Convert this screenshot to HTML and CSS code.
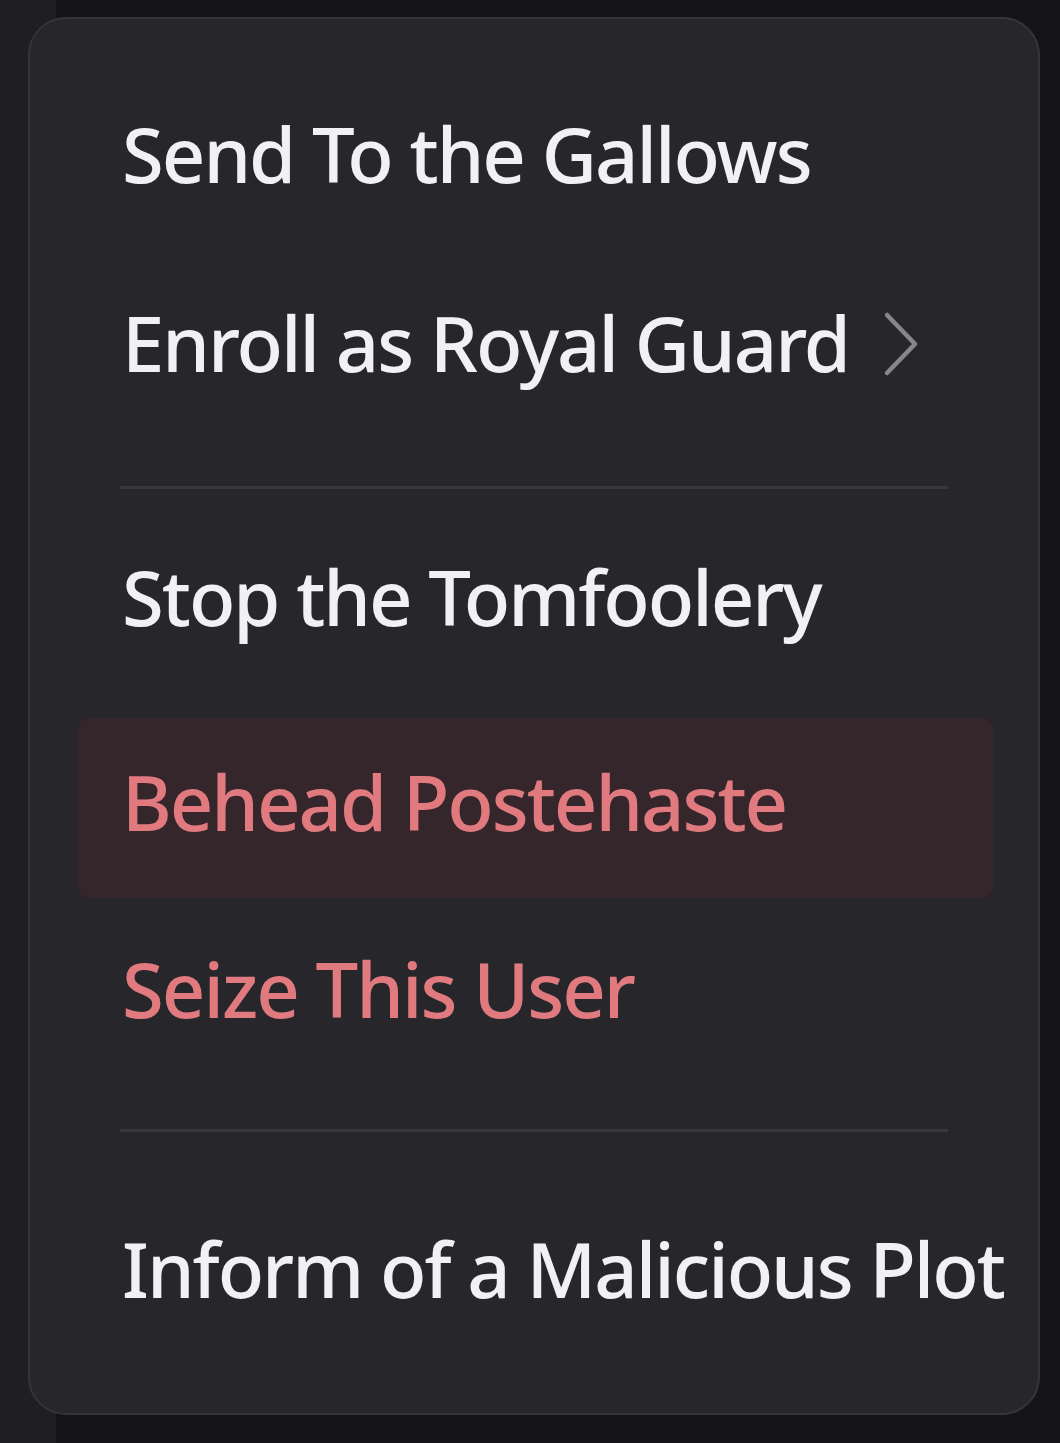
FILE: index.html
```html
<!DOCTYPE html>
<html lang="en">
<head>
<meta charset="utf-8">
<title>Context menu</title>
<link rel="stylesheet" href="styles.css">
</head>
<body>
<div class="backdrop-strip"></div>
<div class="menu" role="menu">
  <div class="item item-first" role="menuitem"><span class="label">Send To the Gallows</span></div>
  <div class="item item-sub" role="menuitem">
    <span class="label">Enroll as Royal Guard</span>
    <svg class="chevron" width="40" height="66" viewBox="0 0 40 66" aria-hidden="true">
      <path d="M5 4 L33 33 L5 62" fill="none" stroke="currentColor" stroke-width="4.5" stroke-linecap="round" stroke-linejoin="round"/>
    </svg>
  </div>
  <div class="separator sep-first"></div>
  <div class="item item-stop" role="menuitem"><span class="label">Stop the Tomfoolery</span></div>
  <div class="item danger focused item-behead" role="menuitem"><span class="label">Behead Postehaste</span></div>
  <div class="item danger item-seize" role="menuitem"><span class="label">Seize This User</span></div>
  <div class="separator sep-second"></div>
  <div class="item item-inform" role="menuitem"><span class="label">Inform of a Malicious Plot</span></div>
</div>
</body>
</html>
```
FILE: styles.css
```css
html, body {
  margin: 0;
  padding: 0;
}

body {
  width: 1060px;
  height: 1443px;
  background: #141418;
  position: relative;
  overflow: hidden;
  font-family: "Noto Sans", "Open Sans", sans-serif;
}

.backdrop-strip {
  position: absolute;
  left: 0;
  top: 0;
  width: 56px;
  height: 1443px;
  background: #1f1f23;
}

.menu {
  position: absolute;
  left: 28px;
  top: 17px;
  box-sizing: border-box;
  width: 1012px;
  height: 1398px;
  background: #26262b;
  border: 2px solid #34343a;
  border-radius: 38px;
  padding: 45px 45px 0 48px;
  display: flex;
  flex-direction: column;
}

.item {
  height: 180px;
  flex: 0 0 auto;
  box-sizing: border-box;
  padding-left: 44px;
  display: flex;
  align-items: center;
  gap: 33px;
  color: #f1f1f3;
  font-size: 76px;
  font-weight: 500;
  letter-spacing: -2px;
  line-height: 1;
  white-space: nowrap;
  border-radius: 12px;
}

.label {
  display: block;
}

.chevron {
  color: #86868c;
  flex: 0 0 auto;
  margin-top: 2px;
}

.danger {
  color: #e07a7f;
}

.focused {
  background: #34262b;
  padding-bottom: 12px;
}

.separator {
  height: 3px;
  flex: 0 0 auto;
  margin-left: 42px;
  width: 828px;
  background: #37373d;
}

.item-sub { margin-top: 9px; }
.sep-first { margin-top: 53px; }
.item-stop { margin-top: 18px; }
.item-behead { margin-top: 31px; }
.item-seize { margin-top: 1px; }
.sep-second { margin-top: 50px; }
.item-inform { margin-top: 47px; }
```
